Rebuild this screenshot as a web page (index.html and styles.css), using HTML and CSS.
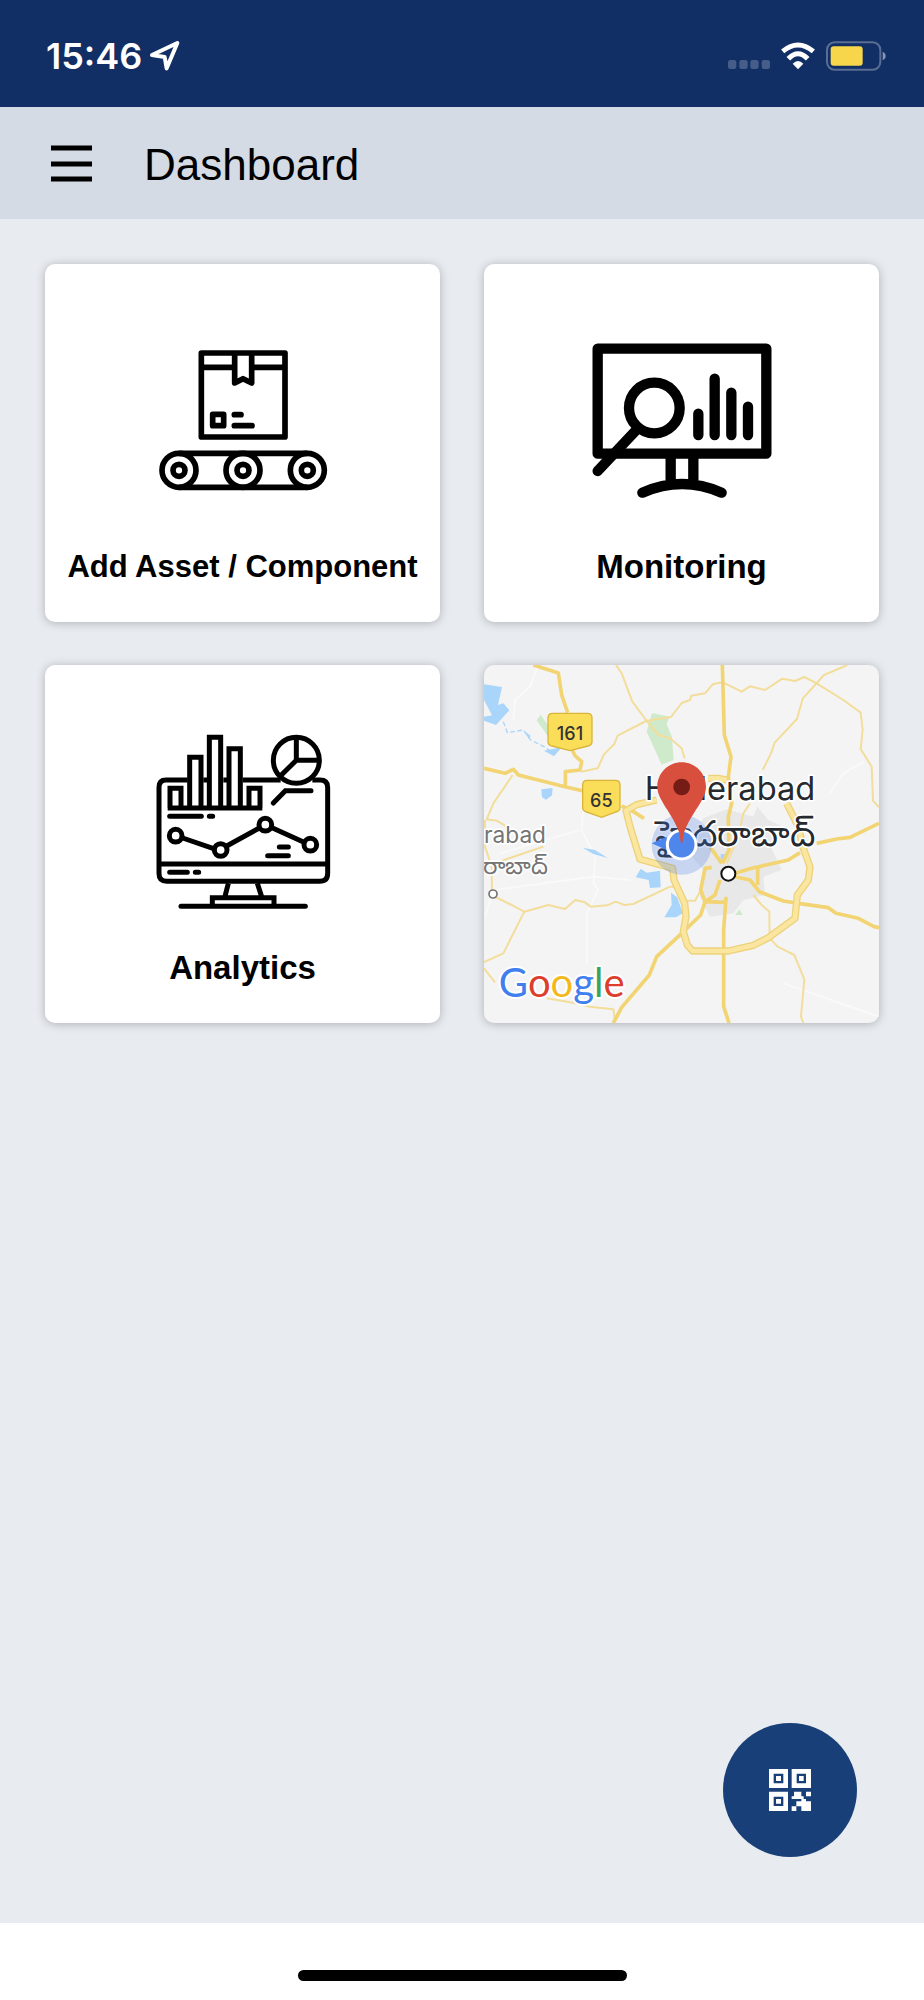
FILE: index.html
```html
<!DOCTYPE html>
<html lang="en">
<head>
  <meta charset="UTF-8" />
  <meta name="viewport" content="width=device-width, initial-scale=1.0"/>
  <title>Dashboard</title>
  <link rel="stylesheet" href="styles.css">
</head>
<body>
  <div class="status-bar">
    <div class="status-left">
      <span class="time">15:46</span>
      <svg class="location" viewBox="0 0 90 90"><path d="M6 42L82 6L50 82L44 48Z"/></svg>
    </div>
    <div class="status-right">
      <svg class="signal" viewBox="0 0 126 27"><rect width="25" height="27" rx="7"/><rect x="34" width="25" height="27" rx="7"/><rect x="67" width="25" height="27" rx="7"/><rect x="101" width="25" height="27" rx="7"/></svg>
      <svg class="wifi" viewBox="0 0 108 84">
        <path class="arc" d="M8 28Q54 -10 100 28M25 50Q54 20 83 50"/>
        <path d="M54 82L38 65Q54 49 70 65Z"/>
      </svg>
      <svg class="battery" viewBox="0 0 180 90">
        <rect class="shell" x="3" y="4" width="160" height="82" rx="23"/>
        <rect class="level" x="14" y="16" width="96" height="58" rx="9"/>
        <path class="tip" d="M170 32Q179 36 179 45Q179 54 170 58Z"/>
      </svg>
    </div>
  </div>

  <header class="page-header">
    <button class="menu-btn" aria-label="Menu">
      <svg viewBox="0 0 41 37"><path d="M0 3H41M0 19H41M0 34H41"/></svg>
    </button>
    <h1>Dashboard</h1>
  </header>

  <main>
    <nav class="grid">
      <a class="card" href="#">
        <!-- Box on a conveyor belt -->
        <svg class="icon icon-asset" viewBox="67 2 540 540">
          <rect x="212" y="68" width="251" height="252"/>
          <path d="M212 111H305M370 111H463M312 70V158L337 145L363 158V70"/>
          <rect x="246" y="252" width="33" height="34"/>
          <path class="round" d="M311 253H331M311 286H364"/>
          <path d="M145 369H530M145 471H530"/>
          <circle cx="145" cy="420" r="51"/><circle cx="145" cy="420" r="18"/>
          <circle cx="337" cy="420" r="51"/><circle cx="337" cy="420" r="18"/>
          <circle cx="530" cy="420" r="51"/><circle cx="530" cy="420" r="18"/>
        </svg>
        <span class="label label-long">Add Asset / Component</span>
      </a>

      <a class="card" href="#">
        <svg class="icon icon-monitor" viewBox="65 33 540 540">
          <rect x="82" y="86" width="506" height="315"/>
          <circle cx="252" cy="264" r="76"/>
          <path d="M198 330L82 453M384 281V345M433 176V345M483 218V345M533 260V345"/>
          <path d="M301 405V480M369 405V480M216 518Q335 466 454 518"/>
        </svg>
        <span class="label">Monitoring</span>
      </a>

      <a class="card" href="#">
        <svg class="icon icon-analytics" viewBox="67 66 540 540">
          <path d="M171 210H106Q85 210 85 232V490Q85 514 108 514H567Q591 514 591 490V232Q591 210 568 210H545M218 210H230M278 210H290M336 210H450M85 462H591"/>
          <path d="M118 294V235H151V294M177 294V142H211V294M236 294V82H270V294M295 294V116H329V294M355 294V235H388V294M111 294H395"/>
          <circle cx="497" cy="151" r="69"/>
          <path d="M497 82V151H565M497 151L449 198"/>
          <path class="round" d="M428 279L464 242H541M117 319H212M236 319H246M117 487H170M194 487H204M446 411H473M411 437H473"/>
          <path d="M156 384L249 416M288 408L386 354M424 353L520 397"/>
          <circle cx="135" cy="377" r="19"/><circle cx="270" cy="420" r="19"/><circle cx="404" cy="344" r="19"/><circle cx="539" cy="404" r="19"/>
          <path d="M293 520L282 563M380 520L394 563M245 588V563H430V588"/>
          <path class="round" d="M151 589H524"/>
        </svg>
        <span class="label">Analytics</span>
      </a>

      <a class="card card-map" href="#" aria-label="Map">
        <svg class="map" viewBox="42 45 1185 1074" preserveAspectRatio="xMidYMid slice">
          <!-- city area -->
          <path class="city" d="M700 505L770 478L850 500L862 470L895 510L960 540L900 585L935 660L880 680L885 735L820 750L790 790L720 800L690 740L700 660L650 600Z"/>
          <path class="minor-w" d="M205 45L180 110L135 150L130 210M340 470L335 540L375 620L370 700L385 720L350 790L350 940M45 800L70 720L370 680L480 690M90 610L330 540M1080 430L1120 370L1180 335M940 1000L1227 1100"/>
          <!-- water and parks -->
          <path class="water" d="M42 103L96 111L84 165L100 160L118 181L78 225L42 212V200L66 196L42 150ZM214 418L248 414L246 436L228 449L216 442ZM338 593L375 600L413 624L370 612ZM512 656L530 668L570 662L572 712L540 714L536 690L497 682ZM603 728L622 742L638 790L618 802H583L605 765ZM244 298L275 292L252 319L222 302ZM160 240L182 258L176 266Z"/>
          <path class="stream" d="M100 215L112 248L160 240L182 270L222 290L250 310"/>
          <path class="water" d="M752 612H768V628H752Z"/>
          <path class="park" d="M546 189L598 200L590 222L606 262L611 330L575 344L530 245ZM212 194L238 232L236 262L200 211ZM796 795L808 778L818 795Z"/>
          <!-- small roads -->
          <path class="minor" d="M438 45L455 70L487 155L528 210L565 255L600 265L635 295L644 325M333 365L383 355L402 313L433 282L443 257L528 213L603 201L635 159L660 150L664 137L705 130L728 103L758 97L815 125L840 109L885 120L937 86L975 93L1003 81L1040 100L1120 150L1172 188L1178 240L1172 297L1205 350L1209 452L1227 472"/>
          <path class="minor" d="M1132 45L1062 75L998 146L981 207L914 278L903 310L878 360M128 375L70 460L50 508L80 512L110 530M45 510V590L65 650L66 735L163 785L235 765L285 777L316 750L345 757L362 770L412 766L437 755L463 765L490 762L600 710M163 785L100 910L42 936M42 955L75 997M230 1045L300 1057L360 1070L430 1078L435 1110M90 634L220 590M850 735L875 765L898 785L899 865L923 890L973 915L1003 988L993 1100L1000 1119M840 460L820 490L805 560L770 640M600 710H618M650 752H675L690 725"/>
          <!-- highways -->
          <path class="major" d="M190 45L265 69L275 135L293 188M307 300L315 317L335 335L330 360L286 365V410M42 355L105 370L130 358L145 375L285 410L340 423M455 468L490 485L522 505M757 45L763 255L783 320L775 380L785 460L775 500L777 600L757 640M720 590L755 640M795 670L845 655L955 630L990 608M1040 580L1100 567L1140 562L1227 520M795 680L840 690L868 725L940 753L985 760L1075 773L1098 790L1165 805L1212 830L1227 833M863 655V705M750 690L735 735L705 755L692 720L705 655L725 652M705 755L765 757L768 745L761 840V1070L777 1119M705 755L692 795L635 850L560 920L538 975L455 1072L430 1119"/>
          <path class="ring-edge" d="M560 450L500 464L468 482L480 530L510 628L608 655L612 690L644 760L648 800L640 845L652 885L668 903H775L850 886L895 863L975 805L982 735L1015 690L1020 650L1000 595L985 530L950 460M715 385H745L770 390"/>
          <path class="ring" d="M560 450L500 464L468 482L480 530L510 628L608 655L612 690L644 760L648 800L640 845L652 885L668 903H775L850 886L895 863L975 805L982 735L1015 690L1020 650L1000 595L985 530L950 460M715 385H745L770 390"/>
          <!-- road shields -->
          <path class="shield" d="M248 190H352Q366 190 366 204V275Q366 285 354 288L300 302L246 288Q234 285 234 275V204Q234 190 248 190Z"/>
          <path class="shield" d="M352 391H436Q450 391 450 405V474Q450 482 438 486L395 502L350 486Q338 482 338 474V405Q338 391 352 391Z"/>
          <text class="road-no" x="300" y="270">161</text>
          <text class="road-no" x="394" y="472">65</text>
          <!-- places -->
          <text class="town" x="228" y="578">rabad</text>
          <text class="town telugu" x="233" y="672">రాబాద్</text>
          <circle class="town-dot" cx="69" cy="732" r="12"/>
          <text class="place" x="1036" y="450">Hyderabad</text>
          <text class="place telugu" x="1036" y="588">హైదరాబాద్</text>
          <circle class="place-dot" cx="775" cy="671" r="21"/>
          <!-- current position and pin -->
          <circle class="accuracy" cx="635" cy="584" r="90"/>
          <path class="heading" d="M545 580L590 560V600Z"/>
          <circle class="position" cx="635" cy="584" r="43"/>
          <path class="pin" d="M635 337C676 337 708 370 708 410C708 451 664 486 642 548L637 580H633L628 548C606 486 562 451 562 410C562 370 594 337 635 337Z"/>
          <circle class="pin-hole" cx="635" cy="411" r="25"/>
          <text class="google" x="86" y="1040"><tspan class="blue">G</tspan><tspan class="red">o</tspan><tspan class="yellow">o</tspan><tspan class="blue">g</tspan><tspan class="green">l</tspan><tspan class="red">e</tspan></text>
        </svg>
      </a>
    </nav>

    <button class="scan-btn" aria-label="Scan QR code">
      <svg viewBox="0 0 126 126">
        <path fill-rule="evenodd" d="M0 0H57V57H0ZM14 14V43H43V14ZM68 0H126V57H68ZM83 14V43H111V14ZM0 68H57V126H0ZM14 83V111H43V83Z"/>
        <path d="M21 21H36V36H21ZM90 21H104V36H90ZM21 90H36V104H21Z"/>
        <path d="M75 68H97V82H104V90H111V97H126V126H97V112H90V104H97V90H82V82H75ZM111 68H126V82H111ZM68 82H82V90H68ZM82 97H97V104H90V112H82V126H68V112H82Z"/>
      </svg>
    </button>
  </main>

  <footer class="home-area"><div class="home-indicator"></div></footer>
</body>
</html>
```

FILE: styles.css
```css
:root {
  --navy: #112f65;
  --blue: #183f78;
  --header: #d5dbe5;
  --background: #e8ebf0;
}

* { box-sizing: border-box; margin: 0; padding: 0; }

body {
  min-height: 100vh;
  display: flex;
  flex-direction: column;
  background: var(--background);
  font-family: "Liberation Sans", Arial, sans-serif;
  color: #000;
}

svg { display: block; }

button {
  border: none;
  background: none;
  cursor: pointer;
}

/* status bar */
.status-bar {
  display: flex;
  align-items: center;
  justify-content: space-between;
  height: 107px;
  padding: 5px 38px 0 46px;
  background: var(--navy);
  color: #fff;
}
.status-left, .status-right { display: flex; align-items: center; }
.status-left { gap: 8px; }
.time {
  font-family: Inter, sans-serif;
  font-size: 36px;
  font-weight: 600;
}
.location {
  width: 30px;
  height: 30px;
  fill: none;
  stroke: #fff;
  stroke-width: 12;
  stroke-linejoin: round;
}
.signal {
  width: 42px;
  height: 9px;
  margin: 16px 10px 0 0;
  fill: #465d89;
}
.wifi {
  width: 36px;
  height: 28px;
  margin-right: 10px;
  fill: #fff;
}
.wifi .arc { fill: none; stroke: #fff; stroke-width: 15; }
.battery { width: 60px; height: 30px; }
.shell { fill: none; stroke: #5a6e95; stroke-width: 6; }
.level { fill: #f7d64b; }
.tip { fill: #8795b2; }

/* header */
.page-header {
  display: flex;
  align-items: center;
  gap: 52px;
  height: 112px;
  padding: 0 51px;
  background: var(--header);
}
.menu-btn svg {
  width: 41px;
  height: 37px;
  stroke: #000;
  stroke-width: 5;
}
h1 {
  padding-top: 4px;
  font-size: 44px;
  font-weight: 400;
}

/* tiles */
main {
  flex: 1;
  display: flex;
  flex-direction: column;
  justify-content: space-between;
  padding: 45px 45px 66px;
}
.grid {
  display: grid;
  grid-template-columns: 1fr 1fr;
  gap: 43px 44px;
}
.card {
  display: flex;
  flex-direction: column;
  align-items: center;
  gap: 36px;
  padding: 67px 0 35px;
  background: #fff;
  border-radius: 10px;
  box-shadow: 0 1px 10px rgba(0,0,0,0.25);
  color: #000;
  text-decoration: none;
}
.icon {
  width: 180px;
  height: 180px;
  fill: none;
  stroke: #000;
}
.icon-asset { stroke-width: 17; stroke-linejoin: round; }
.icon-monitor { stroke-width: 31; stroke-linejoin: round; stroke-linecap: round; }
.icon-analytics { stroke-width: 15; }
.round { stroke-linecap: round; }
.label {
  font-size: 33px;
  line-height: 40px;
  font-weight: 700;
}
.label-long { font-size: 31px; }

/* map tile */
.card-map {
  position: relative;
  padding: 0;
  overflow: hidden;
  background: #f4f4f4;
}
.map {
  position: absolute;
  width: 100%;
  height: 100%;
}
.city { fill: #e8e8e8; }
.water { fill: #a9d5fb; }
.park { fill: #cfeacb; }
.stream { fill: none; stroke: #a9d5fb; stroke-width: 4; stroke-dasharray: 14 8; }
.minor, .minor-w, .major, .ring, .ring-edge { fill: none; stroke-linejoin: round; }
.minor { stroke: #f3dd9b; stroke-width: 6; }
.minor-w { stroke: #fafafa; stroke-width: 5; }
.major { stroke: #f2d473; stroke-width: 11; }
.ring-edge { stroke: #edd27c; stroke-width: 22; }
.ring { stroke: #fae69f; stroke-width: 14; }
.shield { fill: #fadd59; stroke: #d9b53a; stroke-width: 4; }
.road-no, .town, .place { font-family: Inter, "Noto Sans", sans-serif; }
.road-no {
  font-size: 54px;
  font-weight: 500;
  text-anchor: middle;
  fill: #333;
}
.town, .place {
  text-anchor: end;
  stroke: #fff;
  stroke-width: 10;
  stroke-linejoin: round;
  paint-order: stroke;
}
.town { font-size: 68px; fill: #757575; }
.place { font-size: 98px; fill: #262a2e; }
.town.telugu { font-size: 72px; }
.place.telugu { font-size: 108px; }
.town-dot { fill: #fff; stroke: #757575; stroke-width: 5; }
.place-dot { fill: #fff; stroke: #111; stroke-width: 6; }
.accuracy { fill: rgba(66,120,230,0.25); }
.heading { fill: #4a86ee; }
.position { fill: #4f86ec; stroke: #fff; stroke-width: 9; }
.pin { fill: #d94f3d; }
.pin-hole { fill: #751c16; }
.google {
  font-family: Lato, sans-serif;
  font-size: 120px;
  font-weight: 400;
  stroke: #fff;
  stroke-width: 12;
  stroke-linejoin: round;
  paint-order: stroke;
}
.google .blue { fill: #4080ee; }
.google .red { fill: #dd3d2c; }
.google .yellow { fill: #f3b91c; }
.google .green { fill: #3da457; }

/* scan button */
.scan-btn {
  display: flex;
  align-items: center;
  justify-content: center;
  align-self: flex-end;
  width: 134px;
  height: 134px;
  margin-right: 22px;
  border-radius: 50%;
  background: var(--blue);
}
.scan-btn svg {
  width: 42px;
  height: 42px;
  fill: #fff;
}

/* bottom area */
.home-area {
  display: flex;
  justify-content: center;
  padding: 47px 0 19px;
  background: #fff;
}
.home-indicator {
  width: 329px;
  height: 11px;
  border-radius: 6px;
  background: #000;
}
```
